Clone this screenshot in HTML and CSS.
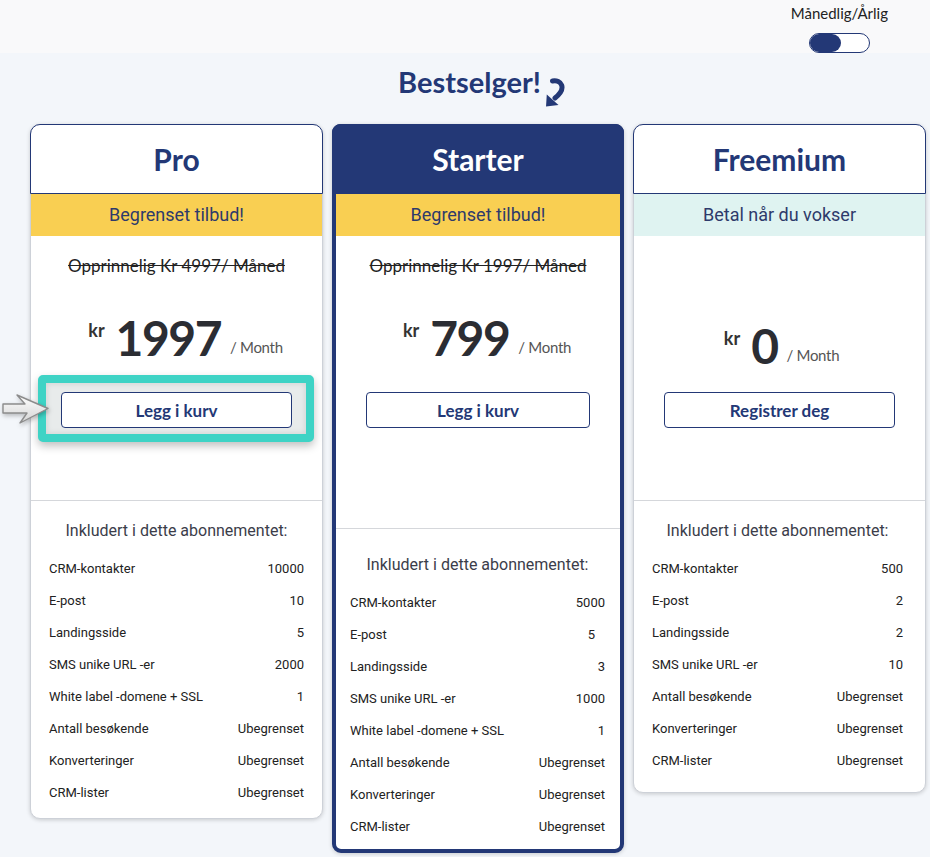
FILE: index.html
```html
<!DOCTYPE html>
<html lang="no">
<head>
<meta charset="utf-8">
<title>Priser</title>
<link rel="stylesheet" href="styles.css">
</head>
<body>
<header class="topbar">
  <div class="billing">
    <span class="billing-label">Månedlig/Årlig</span>
    <span class="toggle"><span class="knob"></span></span>
  </div>
</header>
<main class="pricing">
  <div class="bestseller">
    <span class="bs-text">Bestselger!</span>
    <svg class="bs-arrow" viewBox="0 0 22 30" aria-hidden="true">
      <path d="M8.5 4 C 17 2.5, 23.5 11, 11 21" fill="none" stroke="#233876" stroke-width="5" stroke-linecap="round"/>
      <polygon points="2,29.5 2.8,17.5 14.5,28" fill="#233876"/>
    </svg>
  </div>

  <div class="plans">
    <section class="card card-pro">
      <div class="card-head"><h2>Pro</h2></div>
      <div class="banner banner-offer">Begrenset tilbud!</div>
      <div class="price-box">
        <p class="old-price">Opprinnelig Kr 4997/ Måned</p>
        <div class="price"><span class="cur">kr</span><span class="amt">1997</span><span class="per">/ Month</span></div>
        <button class="cta cta-hl">Legg i kurv</button>
      </div>
      <div class="highlight"></div>
      <svg class="pointer" viewBox="0 0 52 40" aria-hidden="true">
        <defs>
          <linearGradient id="pg" x1="0" y1="0" x2="0" y2="1">
            <stop offset="0" stop-color="#ffffff"/>
            <stop offset="1" stop-color="#d4d4d4"/>
          </linearGradient>
        </defs>
        <path d="M3 14 H25 L17 5 L48 18.5 L20 33 L27 23 H3 Z" fill="url(#pg)" stroke="#8c8c8c" stroke-width="1.4" stroke-linejoin="round"/>
      </svg>
      <div class="features">
        <h3>Inkludert i dette abonnementet:</h3>
        <ul>
          <li><span>CRM-kontakter</span><span>10000</span></li>
          <li><span>E-post</span><span>10</span></li>
          <li><span>Landingsside</span><span>5</span></li>
          <li><span>SMS unike URL -er</span><span>2000</span></li>
          <li><span>White label -domene + SSL</span><span>1</span></li>
          <li><span>Antall besøkende</span><span>Ubegrenset</span></li>
          <li><span>Konverteringer</span><span>Ubegrenset</span></li>
          <li><span>CRM-lister</span><span>Ubegrenset</span></li>
        </ul>
      </div>
    </section>

    <section class="card card-starter">
      <div class="card-head"><h2>Starter</h2></div>
      <div class="banner banner-offer">Begrenset tilbud!</div>
      <div class="price-box">
        <p class="old-price">Opprinnelig Kr 1997/ Måned</p>
        <div class="price"><span class="cur">kr</span><span class="amt">799</span><span class="per">/ Month</span></div>
        <button class="cta">Legg i kurv</button>
      </div>
      <div class="features">
        <h3>Inkludert i dette abonnementet:</h3>
        <ul>
          <li><span>CRM-kontakter</span><span>5000</span></li>
          <li><span>E-post</span><span class="v-in">5</span></li>
          <li><span>Landingsside</span><span>3</span></li>
          <li><span>SMS unike URL -er</span><span>1000</span></li>
          <li><span>White label -domene + SSL</span><span>1</span></li>
          <li><span>Antall besøkende</span><span>Ubegrenset</span></li>
          <li><span>Konverteringer</span><span>Ubegrenset</span></li>
          <li><span>CRM-lister</span><span>Ubegrenset</span></li>
        </ul>
      </div>
    </section>

    <section class="card card-free">
      <div class="card-head"><h2>Freemium</h2></div>
      <div class="banner banner-grow">Betal når du vokser</div>
      <div class="price-box">
        <div class="price price-free"><span class="cur">kr</span><span class="amt">0</span><span class="per">/ Month</span></div>
        <button class="cta cta-free">Registrer deg</button>
      </div>
      <div class="features">
        <h3>Inkludert i dette abonnementet:</h3>
        <ul>
          <li><span>CRM-kontakter</span><span>500</span></li>
          <li><span>E-post</span><span>2</span></li>
          <li><span>Landingsside</span><span>2</span></li>
          <li><span>SMS unike URL -er</span><span>10</span></li>
          <li><span>Antall besøkende</span><span>Ubegrenset</span></li>
          <li><span>Konverteringer</span><span>Ubegrenset</span></li>
          <li><span>CRM-lister</span><span>Ubegrenset</span></li>
        </ul>
      </div>
    </section>
  </div>
</main>
</body>
</html>
```

FILE: styles.css
```css
* { box-sizing: border-box; }

body {
  margin: 0;
  min-height: 857px;
  background: #f3f6fa;
  font-family: "Roboto", "Liberation Sans", sans-serif;
  color: #222;
}

/* top bar */
.topbar {
  height: 53px;
  background: #f9f9fa;
  display: flex;
  justify-content: flex-end;
  padding-right: 42px;
}
.billing {
  display: flex;
  flex-direction: column;
  align-items: center;
  padding-top: 4px;
}
.billing-label {
  font-family: "Lato", sans-serif;
  font-size: 15px;
  line-height: 18px;
  color: #222;
}
.toggle {
  display: flex;
  margin-top: 11px;
  width: 61px;
  height: 20px;
  border: 1.5px solid #233876;
  border-radius: 10px;
  background: #fff;
}
.knob {
  width: 31px;
  height: 100%;
  background: #233876;
  border-radius: 10px;
}

/* bestseller */
.bestseller {
  display: flex;
  justify-content: center;
  align-items: flex-start;
  height: 71px;
  padding: 14px 0 0 9px;
}
.bs-text {
  font-family: "Lato", sans-serif;
  font-weight: 700;
  font-size: 29px;
  line-height: 30px;
  color: #233876;
}
.bs-arrow {
  width: 22px;
  height: 30px;
  margin: 10px -25px 0 3px;
}

/* cards */
.plans {
  display: grid;
  grid-template-columns: 293px 292px 293px;
  column-gap: 9px;
  padding-left: 30px;
  align-items: start;
}
.card {
  position: relative;
  background: #fff;
  border: 1px solid #cdd1d8;
  border-radius: 10px;
  box-shadow: 0 1px 4px rgba(0, 0, 0, 0.18);
}
.card-head {
  height: 70px;
  margin: -1px -1px 0;
  border: 1px solid #233876;
  border-radius: 10px 10px 0 0;
  background: #fff;
  display: flex;
  align-items: center;
  justify-content: center;
}
.card-head h2 {
  margin: 0;
  font-family: "Lato", sans-serif;
  font-weight: 700;
  font-size: 30px;
  color: #233876;
}
.card-starter {
  border: 4px solid #233876;
  border-radius: 9px;
}
.card-starter .card-head {
  margin: -4px -4px 0;
  background: #233876;
  border-radius: 8px 8px 0 0;
}
.card-starter .card-head h2 { color: #fff; }

.banner {
  height: 42px;
  line-height: 42px;
  text-align: center;
  font-size: 18px;
  color: #2e3a6b;
}
.banner-offer { background: #f9cf52; }
.banner-grow { background: #dff3f1; }

/* price */
.price-box {
  display: flex;
  flex-direction: column;
  padding: 19px 0 72px;
}
.card-starter .price-box { padding-bottom: 100px; }
.old-price {
  margin: 0;
  text-align: center;
  font-family: "Lato", sans-serif;
  font-size: 17px;
  line-height: 22px;
  color: #222;
  text-decoration: line-through;
}
.price {
  display: flex;
  justify-content: center;
  height: 60px;
  margin-top: 31px;
  padding-left: 18px;
}
.price-free { margin-top: 61px; padding-left: 4px; }
.cur {
  margin-top: 13px;
  font-family: "Lato", sans-serif;
  font-weight: 700;
  font-size: 18px;
  line-height: 18px;
  color: #333;
}
.amt {
  margin: 0 9px 0 11px;
  font-family: "Lato", sans-serif;
  font-weight: 700;
  font-size: 48px;
  line-height: 60px;
  letter-spacing: -1.5px;
  color: #2b2d33;
}
.per {
  align-self: flex-end;
  margin-bottom: 13px;
  font-family: "Lato", sans-serif;
  font-size: 15px;
  line-height: 16px;
  letter-spacing: -0.3px;
  color: #555;
}
.cta {
  margin: 24px 30px 0;
  height: 36px;
  border: 1px solid #233876;
  border-radius: 4px;
  background: #fff;
  font-family: "Lato", sans-serif;
  font-weight: 700;
  font-size: 17px;
  color: #233876;
}
.cta-hl {
  position: relative;
  z-index: 2;
}
.cta-free { margin-top: 16px; }

/* annotation overlay */
.highlight {
  position: absolute;
  z-index: 1;
  left: 7px;
  top: 250px;
  width: 276px;
  height: 67px;
  border: 8px solid #3ed3c5;
  border-radius: 5px;
  background: #e8ebeb;
  box-shadow: 0 4px 9px rgba(0, 0, 0, 0.25), inset 0 0 6px rgba(0, 0, 0, 0.12);
}
.pointer {
  position: absolute;
  z-index: 3;
  left: -31px;
  top: 265px;
  width: 52px;
  height: 40px;
  filter: drop-shadow(1px 2px 2px rgba(0, 0, 0, 0.25));
}

/* features */
.features {
  border-top: 1px solid #d5d7db;
  padding: 19px 18px 10px;
}
.card-starter .features { padding: 25px 15px 7px 14px; }
.card-free .features { padding: 19px 22px 16px 18px; }
.features h3 {
  margin: 0 0 10px;
  text-align: center;
  font-weight: 400;
  font-size: 16px;
  line-height: 22px;
  color: #3b3d4a;
}
.features ul {
  list-style: none;
  margin: 0;
  padding: 0;
}
.features li {
  display: flex;
  justify-content: space-between;
  align-items: center;
  height: 32px;
  font-size: 13px;
  color: #222;
}
.v-in { margin-right: 10px; }
```
